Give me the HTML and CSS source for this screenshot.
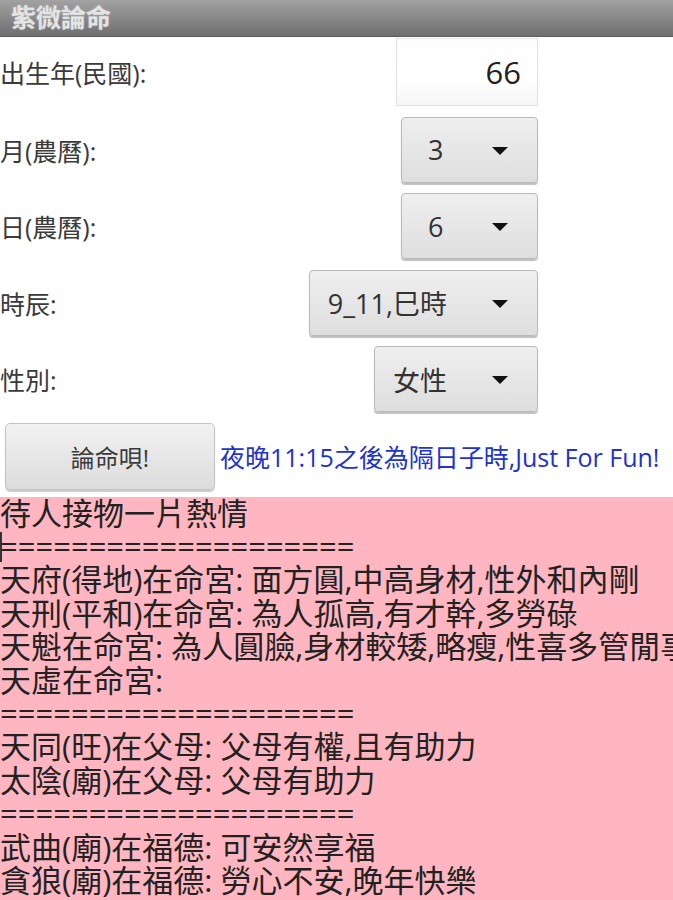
FILE: index.html
```
<!DOCTYPE html>
<html lang="zh-Hant">
  <head>
    <meta charset="UTF-8" />
    <meta name="viewport" content="width=device-width, initial-scale=1.0" />
    <title>紫微論命</title>
    <link rel="stylesheet" href="styles.css">
  </head>
  <body>
    <div class="app">
      <div class="titlebar">紫微論命</div>

      <div class="form">
        <div class="row">
          <span class="label">出生年(民國):</span>
          <div class="input">66</div>
        </div>
        <div class="row">
          <span class="label">月(農曆):</span>
          <div class="spinner spinner-small"><span>3</span><i class="arrow"></i></div>
        </div>
        <div class="row">
          <span class="label">日(農曆):</span>
          <div class="spinner spinner-small"><span>6</span><i class="arrow"></i></div>
        </div>
        <div class="row">
          <span class="label">時辰:</span>
          <div class="spinner"><span>9_11,巳時</span><i class="arrow"></i></div>
        </div>
        <div class="row">
          <span class="label">性別:</span>
          <div class="spinner"><span>女性</span><i class="arrow"></i></div>
        </div>
        <div class="action-row">
          <button class="btn">論命唄!</button>
          <span class="note">夜晚11:15之後為隔日子時,Just For Fun!</span>
        </div>
      </div>

      <div class="result">
        <div>待人接物一片熱情</div>
        <div><span class="caret"></span>====================</div>
        <div>天府(得地)在命宮: 面方圓,中高身材,性外和內剛</div>
        <div>天刑(平和)在命宮: 為人孤高,有才幹,多勞碌</div>
        <div>天魁在命宮: 為人圓臉,身材較矮,略瘦,性喜多管閒事</div>
        <div>天虛在命宮:</div>
        <div>====================</div>
        <div>天同(旺)在父母: 父母有權,且有助力</div>
        <div>太陰(廟)在父母: 父母有助力</div>
        <div>====================</div>
        <div>武曲(廟)在福德: 可安然享福</div>
        <div>貪狼(廟)在福德: 勞心不安,晚年快樂</div>
      </div>
    </div>
  </body>
</html>
```

FILE: styles.css
```
body {
  margin: 0;
  font-family: "Open Sans", "Noto Sans CJK TC", sans-serif;
  background: #fff;
}
.app {
  width: 673px;
  height: 900px;
  display: flex;
  flex-direction: column;
  overflow: hidden;
}
.titlebar {
  height: 36px;
  line-height: 34px;
  padding-left: 11px;
  background: linear-gradient(#a2a2a2, #6e6e6e);
  border-bottom: 1px solid #5c5c5c;
  color: #e4e4e4;
  font-size: 25px;
  font-weight: bold;
  text-shadow: 0 0 2px rgba(255, 255, 255, 0.4);
}
.form {
  padding-top: 1px;
  display: flex;
  flex-direction: column;
  gap: 10.5px;
}
.row {
  width: 538px;
  display: flex;
  align-items: center;
  justify-content: space-between;
}
.label {
  font-size: 25px;
  color: #3a3a3a;
}
.input {
  width: 124px;
  height: 66px;
  line-height: 66px;
  padding-right: 16px;
  text-align: right;
  border: 1px solid #e2e2e2;
  background: linear-gradient(#fdfdfd, #fff 60%, #f6f6f6);
  font-size: 31px;
  color: #222;
}
.spinner {
  position: relative;
  height: 64px;
  padding: 0 90px 0 18px;
  display: flex;
  align-items: center;
  border: 1px solid #b9b9b9;
  border-radius: 4px;
  background: linear-gradient(#efefef, #dedede);
  box-shadow: 0 2px 1px rgba(0, 0, 0, 0.25);
  font-size: 27px;
  color: #333;
}
.spinner-small {
  width: 40px;
  padding-left: 26px;
  padding-right: 69px;
}
.arrow {
  position: absolute;
  right: 29px;
  top: 29px;
  width: 0;
  height: 0;
  border-left: 8px solid transparent;
  border-right: 8px solid transparent;
  border-top: 8px solid #111;
}
.action-row {
  display: flex;
  align-items: center;
  gap: 5px;
}
.btn {
  flex-shrink: 0;
  margin-left: 5px;
  width: 210px;
  height: 67px;
  border: 1px solid #c4c4c4;
  border-radius: 5px;
  background: linear-gradient(#f2f2f2, #dcdcdc);
  box-shadow: 0 2px 1px rgba(0, 0, 0, 0.2);
  font-family: inherit;
  font-size: 24px;
  color: #3a3a3a;
}
.note {
  font-size: 25px;
  color: #2233cc;
  white-space: nowrap;
}
.result {
  flex: 1;
  margin-top: 7px;
  background: #ffb6c1;
  color: #222;
  font-size: 31px;
  line-height: 33.4px;
  white-space: nowrap;
  overflow: hidden;
}
.caret {
  display: inline-block;
  width: 2px;
  height: 30px;
  margin-right: -2px;
  vertical-align: -4px;
  background: #333;
}
```
